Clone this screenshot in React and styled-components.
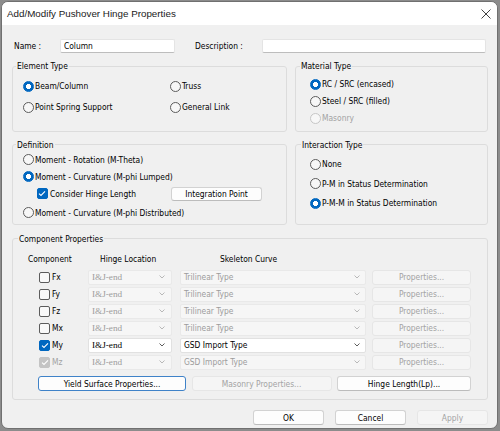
import React from 'react';
import styled, { createGlobalStyle } from 'styled-components';

const GlobalStyle = createGlobalStyle`
  html, body { margin: 0; padding: 0; }
  body { background: #8c8c8c; width: 500px; height: 431px; overflow: hidden; }
`;

const Window = styled.div`
  margin: 1px;
  width: 497px;
  height: 428px;
  box-sizing: border-box;
  border: 1px solid #707070;
  border-radius: 7px;
  overflow: hidden;
  background: #f0f0f0;
  display: flex;
  flex-direction: column;
  font-family: "DejaVu Sans Condensed", "DejaVu Sans", sans-serif;
  font-size: 8.4px;
  color: #000;
`;

const TitleBar = styled.div`
  height: 23px;
  flex: none;
  background: #fff;
  display: flex;
  align-items: center;
  padding: 0 6px 0 5px;
  font-family: "Liberation Sans", Arial, sans-serif;
  font-size: 9.8px;
  color: #1a1a1a;
`;

const Close = styled.svg`
  margin-left: auto;
  width: 10px;
  height: 10px;
`;

const Body = styled.div`
  padding: 14px 9px 0 10px;
  display: flex;
  flex-direction: column;
`;

const NameRow = styled.div`
  display: flex;
  align-items: center;
  height: 14px;
  padding: 0 2px;
`;

const FieldLabel = styled.span`
  width: ${p => p.$w}px;
  margin-left: ${p => p.$ml || 0}px;
  flex: none;
`;

const TextInput = styled.input`
  box-sizing: border-box;
  width: ${p => (p.$w ? `${p.$w}px` : 'auto')};
  flex: ${p => (p.$w ? 'none' : '1')};
  min-width: 0;
  height: 14px;
  margin: 0;
  padding: 0 3px;
  background: #fff;
  border: 1px solid #e4e4e4;
  border-bottom-color: #bdbdbd;
  border-radius: 2px;
  font: inherit;
  color: #000;
  outline: none;
`;

const Grid = styled.div`
  display: grid;
  grid-template-columns: 275px 193px;
  column-gap: 8px;
  margin-top: ${p => p.$mt}px;
`;

const Group = styled.fieldset`
  margin: ${p => p.$mt || 0}px 0 0;
  min-width: 0;
  padding: ${p => p.$pad};
  border: 1px solid #dcdcdc;
  border-radius: 3px;
  display: flex;
  flex-direction: column;
`;

const Legend = styled.legend`
  padding: 0 1px;
  margin-left: ${p => p.$ml}px;
  line-height: 10px;
`;

const TwoCol = styled.div`
  display: grid;
  grid-template-columns: 147px 1fr;
  grid-auto-rows: ${p => p.$row}px;
`;

const Option = styled.label`
  display: flex;
  align-items: center;
  height: ${p => p.$h || 17}px;
  margin-top: ${p => p.$mt || 0}px;
  margin-left: ${p => p.$indent || 0}px;
  color: ${p => (p.$disabled ? '#a3a3a3' : '#000')};
  white-space: nowrap;
`;

const RadioDot = styled.span`
  box-sizing: border-box;
  width: 11px;
  height: 11px;
  flex: none;
  border-radius: 50%;
  margin-right: 1.5px;
  border: 1px solid ${p => (p.$on ? '#0067c0' : p.$disabled ? '#c6c6c6' : '#5c5c5c')};
  background: ${p =>
    p.$on ? 'radial-gradient(circle, #fff 0 2.3px, #0067c0 2.8px)' : '#f7f7f7'};
`;

const CheckBox = styled.span`
  box-sizing: border-box;
  width: 11px;
  height: 11px;
  flex: none;
  border-radius: 2px;
  margin-right: ${p => p.$gap || 2}px;
  display: flex;
  align-items: center;
  justify-content: center;
  border: 1px solid ${p =>
    p.$on ? (p.$disabled ? '#c4c4c4' : '#0067c0') : '#5c5c5c'};
  background: ${p => (p.$on ? (p.$disabled ? '#c4c4c4' : '#0067c0') : '#f9f9f9')};
`;

const CheckRow = styled.div`
  display: grid;
  grid-template-columns: 148.5px 91px;
  align-items: center;
  height: 17px;
`;

const Button = styled.button`
  box-sizing: border-box;
  width: ${p => p.$w}px;
  height: ${p => p.$h || 15}px;
  margin: 0;
  padding: 0;
  font: inherit;
  border-radius: 3px;
  background: ${p => (p.disabled ? '#f5f5f5' : '#fdfdfd')};
  color: ${p => (p.disabled ? '#a3a3a3' : '#000')};
  border: 1px solid ${p => (p.$default ? '#3f82c8' : p.disabled ? '#e6e6e6' : '#d2d2d2')};
  border-bottom-color: ${p => (p.$default ? '#3f82c8' : p.disabled ? '#e6e6e6' : '#bcbcbc')};
`;

const Table = styled.div`
  display: grid;
  grid-template-columns: 60px 92px 192px 99px;
  grid-auto-rows: 17px;
  align-items: center;
`;

const Head = styled.div`
  height: 14px;
  line-height: 14px;
  padding-left: ${p => p.$pl || 0}px;
  margin-bottom: 4.5px;
  align-self: start;
`;

const CompCell = styled.div`
  display: flex;
  align-items: center;
  padding-left: 11px;
  color: ${p => (p.$disabled ? '#a3a3a3' : '#000')};
`;

const Select = styled.div`
  box-sizing: border-box;
  width: ${p => p.$w}px;
  height: 15px;
  display: flex;
  align-items: center;
  justify-content: space-between;
  padding: 0 ${p => p.$pr}px 0 3px;
  background: ${p => (p.$disabled ? '#f6f6f6' : '#fff')};
  border: 1px solid ${p => (p.$disabled ? '#e9e9e9' : '#e1e1e1')};
  border-radius: 2px;
  color: ${p => (p.$disabled ? '#9c9c9c' : '#000')};
  font-family: ${p => (p.$serif ? '"Liberation Serif", "Times New Roman", serif' : 'inherit')};
  font-size: ${p => (p.$serif ? '9.2px' : 'inherit')};
`;

const ButtonRow = styled.div`
  display: flex;
  gap: 5.5px;
  margin-top: 5.5px;
  padding-left: 10px;
`;

const Footer = styled.div`
  display: flex;
  justify-content: flex-end;
  gap: 11px;
  margin-top: 10px;
`;

const Chevron = ({ color }) => (
  <svg width="6" height="4" viewBox="0 0 6 4">
    <polyline points="0.5,0.5 3,3 5.5,0.5" fill="none" stroke={color} strokeWidth="0.8" />
  </svg>
);

const Tick = () => (
  <svg width="8" height="7" viewBox="0 0 8 7">
    <polyline points="1,3.6 3,5.5 7,1.3" fill="none" stroke="#fff" strokeWidth="1.1" />
  </svg>
);

const Radio = ({ on, disabled, children, ...rest }) => (
  <Option $disabled={disabled} {...rest}>
    <RadioDot $on={on} $disabled={disabled} />
    {children}
  </Option>
);

const rows = [
  { name: 'Fx', on: false, skel: 'Trilinear Type', off: true },
  { name: 'Fy', on: false, skel: 'Trilinear Type', off: true },
  { name: 'Fz', on: false, skel: 'Trilinear Type', off: true },
  { name: 'Mx', on: false, skel: 'Trilinear Type', off: true },
  { name: 'My', on: true, skel: 'GSD Import Type', off: false },
  { name: 'Mz', on: true, skel: 'GSD Import Type', off: true, grey: true },
];

export default function App() {
  return (
    <>
      <GlobalStyle />
      <Window>
        <TitleBar>
          Add/Modify Pushover Hinge Properties
          <Close viewBox="0 0 10 10">
            <path d="M0.5 0.5 L9.5 9.5 M9.5 0.5 L0.5 9.5" stroke="#2b2b2b" strokeWidth="0.9" />
          </Close>
        </TitleBar>
        <Body>
          <NameRow>
            <FieldLabel $w={46}>Name :</FieldLabel>
            <TextInput $w={115} defaultValue="Column" />
            <FieldLabel $w={67} $ml={20}>Description :</FieldLabel>
            <TextInput defaultValue="" />
          </NameRow>

          <Grid $mt={8}>
            <Group $pad="4.5px 8px 12.5px 9.5px">
              <Legend $ml={-6.5}>Element Type</Legend>
              <TwoCol $row={21}>
                <Radio on $h={21}>Beam/Column</Radio>
                <Radio $h={21}>Truss</Radio>
                <Radio $h={21}>Point Spring Support</Radio>
                <Radio $h={21}>General Link</Radio>
              </TwoCol>
            </Group>
            <Group $pad="4.5px 8px 4px 13.5px">
              <Legend $ml={-9.5}>Material Type</Legend>
              <Radio on>RC / SRC (encased)</Radio>
              <Radio>Steel / SRC (filled)</Radio>
              <Radio disabled>Masonry</Radio>
            </Group>
          </Grid>

          <Grid $mt={8}>
            <Group $pad="1.5px 8px 2.5px 9.5px">
              <Legend $ml={-6.5}>Definition</Legend>
              <Radio>Moment - Rotation (M-Theta)</Radio>
              <Radio on>Moment - Curvature (M-phi Lumped)</Radio>
              <CheckRow>
                <Option $indent={14}>
                  <CheckBox $on $gap={2.5}><Tick /></CheckBox>
                  Consider Hinge Length
                </Option>
                <Button $w={91} $h={14}>Integration Point</Button>
              </CheckRow>
              <Radio $mt={2}>Moment - Curvature (M-phi Distributed)</Radio>
            </Group>
            <Group $pad="5px 8px 4px 13.5px">
              <Legend $ml={-8.5}>Interaction Type</Legend>
              <Radio $h={19.5}>None</Radio>
              <Radio $h={19.5}>P-M in Status Determination</Radio>
              <Radio $h={19.5} on>P-M-M in Status Determination</Radio>
            </Group>
          </Grid>

          <Group $mt={9} $pad="8px 0 8px 15px">
            <Legend $ml={-10}>Component Properties</Legend>
            <Table>
              <Head>Component</Head>
              <Head $pl={12}>Hinge Location</Head>
              <Head $pl={40}>Skeleton Curve</Head>
              <Head />
              {rows.map(r => (
                <React.Fragment key={r.name}>
                  <CompCell $disabled={r.grey}>
                    <CheckBox $on={r.on} $disabled={r.grey}>{r.on && <Tick />}</CheckBox>
                    {r.name}
                  </CompCell>
                  <Select $w={84} $pr={6} $disabled={r.off} $serif>
                    <span>I&amp;J-end</span>
                    <Chevron color={r.off ? '#a8a8a8' : '#333'} />
                  </Select>
                  <Select $w={186} $pr={5} $disabled={r.off}>
                    <span>{r.skel}</span>
                    <Chevron color={r.off ? '#a8a8a8' : '#333'} />
                  </Select>
                  <Button $w={99} disabled>Properties...</Button>
                </React.Fragment>
              ))}
            </Table>
            <ButtonRow>
              <Button $w={148} $default>Yield Surface Properties...</Button>
              <Button $w={140} disabled>Masonry Properties...</Button>
              <Button $w={134}>Hinge Length(Lp)...</Button>
            </ButtonRow>
          </Group>

          <Footer>
            <Button $w={71}>OK</Button>
            <Button $w={71}>Cancel</Button>
            <Button $w={71} disabled>Apply</Button>
          </Footer>
        </Body>
      </Window>
    </>
  );
}
